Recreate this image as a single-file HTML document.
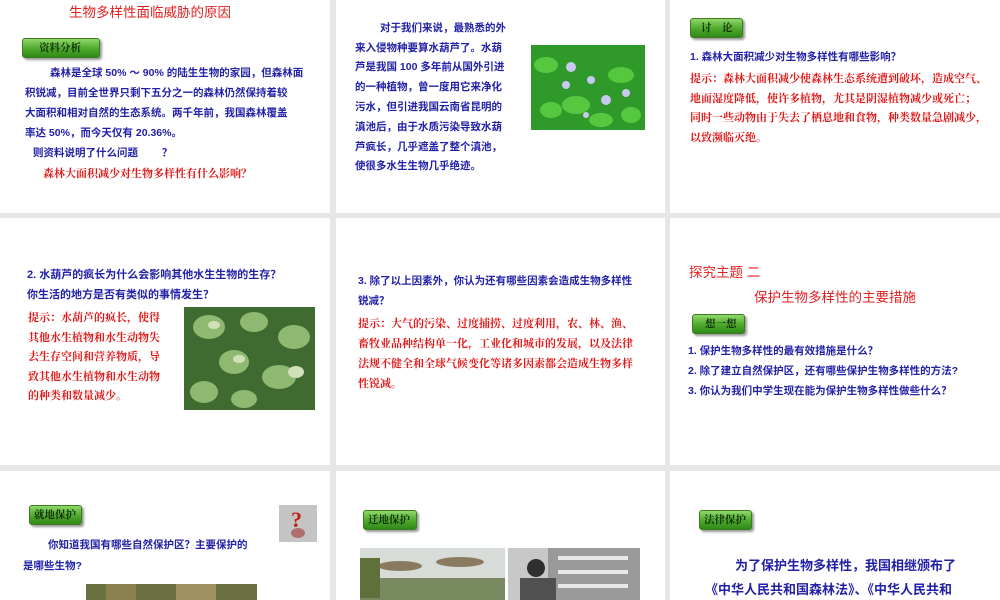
<!DOCTYPE html>
<html><head><meta charset="utf-8"><style>
*{margin:0;padding:0;box-sizing:border-box}
body{width:1000px;height:600px;background:#e6e6e6;position:relative;overflow:hidden;font-family:"Liberation Sans","Noto Sans CJK SC",sans-serif}
.s{position:absolute;background:#fff}
.t{position:absolute;white-space:nowrap;font-size:10.5px;line-height:14px;color:#2222a8;font-weight:bold}
.rt{color:#e01818;font-family:"Noto Serif CJK SC","Liberation Serif",serif;font-weight:bold;font-size:11px}
.h{color:#e02020;font-size:13.5px;font-weight:normal;line-height:16px}
.b{position:absolute;height:20px;border-radius:3px;background:linear-gradient(#8fd86a,#4da82a 55%,#2f8a18);border:1px solid #3d7a22;box-shadow:2px 2px 2px #999;font-size:10.5px;line-height:18px;color:#10300a;font-weight:bold;padding-left:8px;font-family:"Noto Serif CJK SC",serif}
.img{position:absolute}
</style></head><body>
<div class="s" style="left:0;top:0;width:330px;height:213px"></div>
<div class="s" style="left:336px;top:0;width:329px;height:213px"></div>
<div class="s" style="left:670px;top:0;width:330px;height:213px"></div>
<div class="s" style="left:0;top:218px;width:330px;height:247px"></div>
<div class="s" style="left:336px;top:218px;width:329px;height:247px"></div>
<div class="s" style="left:670px;top:218px;width:330px;height:247px"></div>
<div class="s" style="left:0;top:471px;width:330px;height:129px"></div>
<div class="s" style="left:336px;top:471px;width:329px;height:129px"></div>
<div class="s" style="left:670px;top:471px;width:330px;height:129px"></div>

<div class="t h" style="left:69px;top:5px">生物多样性面临威胁的原因</div>
<div class="b" style="left:22px;top:38px;width:78px;padding-left:16px">资料分析</div>
<div class="t" style="left:50px;top:66px">森林是全球 50% ～ 90% 的陆生生物的家园，但森林面</div>
<div class="t" style="left:25px;top:86px">积锐减，目前全世界只剩下五分之一的森林仍然保持着较</div>
<div class="t" style="left:25px;top:106px">大面积和相对自然的生态系统。两千年前，我国森林覆盖</div>
<div class="t" style="left:25px;top:126px">率达 50%，而今天仅有 20.36%。</div>
<div class="t" style="left:33px;top:146px">则资料说明了什么问题　　 ？</div>
<div class="t rt" style="left:43px;top:166px">森林大面积减少对生物多样性有什么影响？</div>

<div class="t" style="left:380px;top:21px">对于我们来说，最熟悉的外</div>
<div class="t" style="left:355px;top:41px">来入侵物种要算水葫芦了。水葫</div>
<div class="t" style="left:355px;top:60px">芦是我国 100 多年前从国外引进</div>
<div class="t" style="left:355px;top:80px">的一种植物，曾一度用它来净化</div>
<div class="t" style="left:355px;top:100px">污水，但引进我国云南省昆明的</div>
<div class="t" style="left:355px;top:120px">滇池后，由于水质污染导致水葫</div>
<div class="t" style="left:355px;top:140px">芦疯长，几乎遮盖了整个滇池，</div>
<div class="t" style="left:355px;top:159px">使很多水生生物几乎绝迹。</div>
<svg class="img" style="left:531px;top:45px" width="114" height="85"><rect width="114" height="85" fill="#2f9a2a"/><g fill="#55c840"><ellipse cx="15" cy="20" rx="12" ry="8"/><ellipse cx="45" cy="60" rx="14" ry="9"/><ellipse cx="90" cy="30" rx="13" ry="8"/><ellipse cx="70" cy="75" rx="12" ry="7"/><ellipse cx="100" cy="70" rx="10" ry="8"/><ellipse cx="20" cy="65" rx="11" ry="8"/></g><g fill="#c8c8f0"><circle cx="40" cy="22" r="5"/><circle cx="60" cy="35" r="4"/><circle cx="35" cy="40" r="4"/><circle cx="75" cy="55" r="5"/><circle cx="55" cy="70" r="3"/><circle cx="95" cy="48" r="4"/></g></svg>

<div class="b" style="left:690px;top:18px;width:53px;padding-left:10px">讨　论</div>
<div class="t" style="left:690px;top:50px">1. 森林大面积减少对生物多样性有哪些影响？</div>
<div class="t rt" style="left:690px;top:71px">提示：森林大面积减少使森林生态系统遭到破坏，造成空气、</div>
<div class="t rt" style="left:690px;top:91px">地面湿度降低，使许多植物，尤其是阴湿植物减少或死亡；</div>
<div class="t rt" style="left:690px;top:110px">同时一些动物由于失去了栖息地和食物，种类数量急剧减少，</div>
<div class="t rt" style="left:690px;top:130px">以致濒临灭绝。</div>

<div class="t" style="left:27px;top:268px;font-size:11px">2. 水葫芦的疯长为什么会影响其他水生生物的生存？</div>
<div class="t" style="left:27px;top:288px;font-size:11px">你生活的地方是否有类似的事情发生？</div>
<div class="t rt" style="left:28px;top:310px">提示：水葫芦的疯长，使得</div>
<div class="t rt" style="left:28px;top:330px">其他水生植物和水生动物失</div>
<div class="t rt" style="left:28px;top:349px">去生存空间和营养物质，导</div>
<div class="t rt" style="left:28px;top:369px">致其他水生植物和水生动物</div>
<div class="t rt" style="left:28px;top:388px">的种类和数量减少。</div>
<svg class="img" style="left:184px;top:307px" width="131" height="103"><rect width="131" height="103" fill="#3f6a30"/><g fill="#8fb870"><ellipse cx="25" cy="20" rx="16" ry="12"/><ellipse cx="70" cy="15" rx="14" ry="10"/><ellipse cx="110" cy="30" rx="16" ry="12"/><ellipse cx="50" cy="55" rx="15" ry="12"/><ellipse cx="95" cy="70" rx="17" ry="12"/><ellipse cx="20" cy="85" rx="14" ry="11"/><ellipse cx="60" cy="92" rx="13" ry="9"/></g><g fill="#d0e0b8"><ellipse cx="30" cy="18" rx="6" ry="4"/><ellipse cx="112" cy="65" rx="8" ry="6"/><ellipse cx="55" cy="52" rx="6" ry="4"/></g></svg>

<div class="t" style="left:358px;top:274px">3. 除了以上因素外，你认为还有哪些因素会造成生物多样性</div>
<div class="t" style="left:358px;top:294px">锐减？</div>
<div class="t rt" style="left:358px;top:316px">提示：大气的污染、过度捕捞、过度利用，农、林、渔、</div>
<div class="t rt" style="left:358px;top:336px">畜牧业品种结构单一化，工业化和城市的发展，以及法律</div>
<div class="t rt" style="left:358px;top:356px">法规不健全和全球气候变化等诸多因素都会造成生物多样</div>
<div class="t rt" style="left:358px;top:376px">性锐减。</div>

<div class="t h" style="left:689px;top:265px">探究主题 二</div>
<div class="t h" style="left:754px;top:290px">保护生物多样性的主要措施</div>
<div class="b" style="left:692px;top:314px;width:53px;padding-left:12px">想一想</div>
<div class="t" style="left:688px;top:344px">1. 保护生物多样性的最有效措施是什么？</div>
<div class="t" style="left:688px;top:364px">2. 除了建立自然保护区，还有哪些保护生物多样性的方法?</div>
<div class="t" style="left:688px;top:384px">3. 你认为我们中学生现在能为保护生物多样性做些什么？</div>

<div class="b" style="left:29px;top:505px;width:53px;padding-left:4px">就地保护</div>
<svg class="img" style="left:279px;top:505px" width="38" height="37"><rect width="38" height="37" fill="#c4c4c4"/><text x="12" y="22" font-size="22" font-weight="bold" fill="#c02010" font-family="Liberation Serif">?</text><ellipse cx="19" cy="28" rx="7" ry="5" fill="#b07070"/></svg>
<div class="t" style="left:48px;top:538px">你知道我国有哪些自然保护区？主要保护的</div>
<div class="t" style="left:23px;top:559px">是哪些生物?</div>
<svg class="img" style="left:86px;top:584px" width="171" height="16"><rect width="171" height="16" fill="#6a7040"/><rect x="20" width="30" height="16" fill="#8a8050"/><rect x="90" width="40" height="16" fill="#a09060"/></svg>

<div class="b" style="left:363px;top:510px;width:54px;padding-left:4px">迁地保护</div>
<svg class="img" style="left:360px;top:548px" width="145" height="52"><rect width="145" height="52" fill="#d8dcd8"/><rect y="30" width="145" height="22" fill="#7a8a60"/><ellipse cx="40" cy="18" rx="22" ry="5" fill="#8a7a60"/><ellipse cx="100" cy="14" rx="24" ry="5" fill="#8a7a60"/><rect x="0" y="10" width="20" height="40" fill="#60703a"/></svg>
<svg class="img" style="left:508px;top:548px" width="132" height="52"><rect width="132" height="52" fill="#c8c8c8"/><rect x="40" width="92" height="52" fill="#9a9a9a"/><g fill="#e8e8e8"><rect x="50" y="8" width="70" height="4"/><rect x="50" y="22" width="70" height="4"/><rect x="50" y="36" width="70" height="4"/></g><circle cx="28" cy="20" r="9" fill="#303030"/><rect x="12" y="30" width="36" height="22" fill="#505050"/></svg>

<div class="b" style="left:699px;top:510px;width:53px;padding-left:4px">法律保护</div>
<div class="t" style="left:735px;top:558px;font-size:13px;line-height:16px">为了保护生物多样性，我国相继颁布了</div>
<div class="t" style="left:705px;top:582px;font-size:13px;line-height:16px">《中华人民共和国森林法》、《中华人民共和</div>
</body></html>
